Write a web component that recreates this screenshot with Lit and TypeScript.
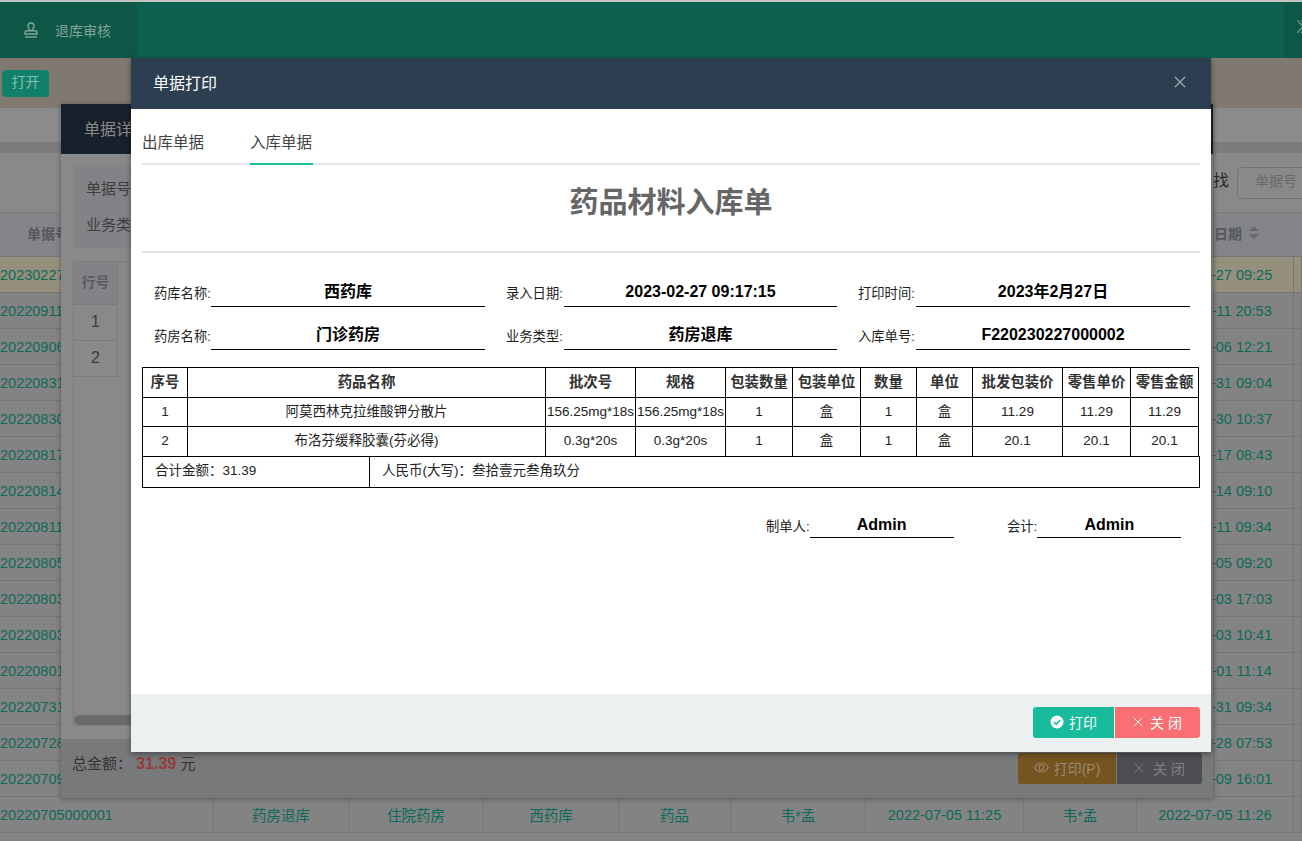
import { LitElement, html, css, svg } from "lit";
import { customElement } from "lit/decorators.js";

const rows = [
  ["20230227000002", "2023-02-27 09:25"],
  ["20220911000001", "2022-09-11 20:53"],
  ["20220906000001", "2022-09-06 12:21"],
  ["20220831000001", "2022-08-31 09:04"],
  ["20220830000001", "2022-08-30 10:37"],
  ["20220817000001", "2022-08-17 08:43"],
  ["20220814000001", "2022-08-14 09:10"],
  ["20220811000001", "2022-08-11 09:34"],
  ["20220805000001", "2022-08-05 09:20"],
  ["20220803000002", "2022-08-03 17:03"],
  ["20220803000001", "2022-08-03 10:41"],
  ["20220801000001", "2022-08-01 11:14"],
  ["20220731000001", "2022-07-31 09:34"],
  ["20220728000001", "2022-07-28 07:53"],
  ["20220709000001", "2022-07-09 16:01"],
  ["20220705000001", "2022-07-05 11:26"],
];

const lastRow = ["药房退库", "住院药房", "西药库", "药品", "韦*孟", "2022-07-05 11:25", "韦*孟"];

const fields = [
  ["药库名称:", "西药库"],
  ["录入日期:", "2023-02-27 09:17:15"],
  ["打印时间:", "2023年2月27日"],
  ["药房名称:", "门诊药房"],
  ["业务类型:", "药房退库"],
  ["入库单号:", "F220230227000002"],
];

const heads = ["序号", "药品名称", "批次号", "规格", "包装数量", "包装单位", "数量", "单位", "批发包装价", "零售单价", "零售金额"];
const colWidths = [45, 358, 90, 90, 67, 68, 56, 56, 90, 68, 68];
const items = [
  ["1", "阿莫西林克拉维酸钾分散片", "156.25mg*18s", "156.25mg*18s", "1", "盒", "1", "盒", "11.29", "11.29", "11.29"],
  ["2", "布洛芬缓释胶囊(芬必得)", "0.3g*20s", "0.3g*20s", "1", "盒", "1", "盒", "20.1", "20.1", "20.1"],
];

const closeIcon = (size: number) => svg`<svg width=${size} height=${size} viewBox="0 0 12 12" fill="none" stroke="currentColor" stroke-width="1.1"><path d="M1 1l10 10M11 1L1 11"/></svg>`;

@customElement("app-root")
export class AppRoot extends LitElement {
  static styles = css`
    :host {
      display: block;
      position: relative;
      width: 1302px;
      height: 841px;
      overflow: hidden;
      background: #838383;
      font-family: "Liberation Sans", "Noto Sans CJK SC", sans-serif;
      font-size: 14px;
      color: #333;
    }
    .topbar {
      height: 56px;
      border-top: 2px solid #c4c4c4;
      background: #0d604f;
      display: flex;
      justify-content: space-between;
    }
    .tab {
      width: 137px;
      background: #0c5746;
      display: flex;
      align-items: center;
      gap: 17px;
      padding-left: 24px;
      box-sizing: border-box;
      color: #84a39b;
    }
    .more {
      width: 18px;
      background: #0c5746;
      color: #84a39b;
      padding: 18px 0 0 13px;
      box-sizing: border-box;
    }
    .toolbar {
      height: 50px;
      background: #80796f;
      padding: 12px 0 0 2px;
      box-sizing: border-box;
    }
    .open {
      width: 47px;
      height: 27px;
      padding-bottom: 5px;
      box-sizing: border-box;
      background: #108068;
      color: #85bdb1;
      border-radius: 4px;
      display: flex;
      align-items: center;
      justify-content: center;
    }
    .gap {
      height: 34px;
      background: #8b8b8b;
    }
    .strip {
      height: 11px;
      background: #7c7c7d;
    }
    .search {
      height: 60px;
      background: #89898a;
      border-bottom: 1px solid #7b7b7b;
      box-sizing: border-box;
      display: flex;
      justify-content: flex-end;
      align-items: center;
      gap: 8px;
      color: #2a2a2a;
    }
    .search .find {
      font-size: 16px;
      padding-bottom: 7px;
    }
    .search .input {
      width: 70px;
      height: 32px;
      margin-right: -5px;
      border: 1px solid #737373;
      border-radius: 4px;
      box-sizing: border-box;
      color: #6a6a6a;
      padding: 2px 0 0 17px;
      font-size: 14px;
      white-space: nowrap;
      overflow: hidden;
    }
    .grid-row {
      display: grid;
      grid-template-columns: 214px 135px 135px 135px 112px 135px 158px 113px 157px 8px;
      height: 36px;
      box-sizing: border-box;
      border-bottom: 1px solid #767676;
      background: #838383;
      color: #0d6a59;
      font-size: 14.5px;
    }
    .grid-row.active {
      background: #958f7e;
    }
    .grid-row.head {
      height: 44px;
      padding-bottom: 4px;
      background: #82848a;
      color: #55575b;
      font-weight: bold;
      font-size: 14px;
    }
    .cell {
      display: flex;
      align-items: center;
      justify-content: center;
      border-right: 1px solid #767676;
      white-space: nowrap;
      overflow: hidden;
    }
    .cell.first {
      justify-content: flex-start;
    }
    .grid-row.head .cell {
      border-right: 0;
    }
    .sort {
      margin-left: 7px;
    }
    .head .num {
      padding-left: 27px;
    }
    .head .date {
      padding-left: 14px;
    }

    /* dimmed window behind the print dialog */
    .detail {
      position: absolute;
      left: 61px;
      top: 104px;
      width: 1152px;
      height: 694px;
      background: #89898a;
      box-shadow: 0 1px 5px rgba(0, 0, 0, 0.35);
      display: flex;
      flex-direction: column;
    }
    .detail-head {
      height: 50px;
      flex: none;
      box-sizing: border-box;
      background: #18202b;
      color: #8b8b8b;
      font-size: 16px;
      padding: 0 0 2px 23px;
      display: flex;
      align-items: center;
    }
    .detail-body {
      flex: 1;
      padding: 11px 12px 13px;
      display: flex;
      flex-direction: column;
      gap: 13px;
    }
    .panel {
      height: 83px;
      flex: none;
      background: #828386;
      padding: 11px 0 0 13px;
      box-sizing: border-box;
      font-size: 15px;
      color: #3e3e3e;
      display: flex;
      flex-direction: column;
      gap: 10px;
      line-height: 26px;
    }
    .inner {
      flex: 1;
      border: 1px solid #7e7e7e;
      position: relative;
    }
    .inner-row {
      display: flex;
      width: 44px;
      height: 36px;
      box-sizing: border-box;
      padding-bottom: 2px;
      align-items: center;
      justify-content: center;
      border-right: 1px solid #7b7b7b;
      border-bottom: 1px solid #7b7b7b;
      color: #3c3c3c;
      font-size: 16px;
    }
    .inner-row.head {
      height: 43px;
      padding-bottom: 5px;
      background: #828386;
      color: #5c5c5c;
      font-weight: bold;
      font-size: 14px;
    }
    .scroll {
      position: absolute;
      left: 0;
      bottom: 0;
      width: 900px;
      height: 10px;
      border-radius: 5px;
      background: #6b6b6b;
    }
    .detail-foot {
      height: 59px;
      flex: none;
      background: #78797b;
      display: flex;
      align-items: flex-start;
      justify-content: space-between;
      padding: 14px 11px 0 11px;
      box-sizing: border-box;
    }
    .sum {
      font-size: 15px;
      color: #333;
      line-height: 22px;
    }
    .sum b {
      color: #963c3c;
      font-size: 16px;
    }
    .btns {
      display: flex;
      gap: 1px;
    }
    .btn {
      height: 31px;
      padding-bottom: 2px;
      display: flex;
      align-items: center;
      justify-content: center;
      gap: 5px;
      font-size: 14px;
      box-sizing: border-box;
    }
    .btn.first {
      border-radius: 3px 0 0 3px;
    }
    .btn.last {
      border-radius: 0 3px 3px 0;
    }
    .dim-print {
      width: 98px;
      background: #75541f;
      color: #9a8a70;
    }
    .dim-close {
      width: 85px;
      background: #4d4e52;
      color: #808184;
    }

    /* print dialog */
    .modal {
      position: absolute;
      left: 131px;
      top: 58px;
      width: 1080px;
      height: 694px;
      background: #fff;
      box-shadow: 0 2px 6px rgba(0, 0, 0, 0.4);
      display: flex;
      flex-direction: column;
    }
    .modal-head {
      height: 51px;
      flex: none;
      box-sizing: border-box;
      background: #2c3e50;
      color: #fff;
      font-size: 16px;
      padding: 0 25px 3px 22px;
      display: flex;
      align-items: center;
      justify-content: space-between;
    }
    .modal-head span {
      color: #a5adb5;
      display: flex;
    }
    .modal-body {
      flex: 1;
      padding: 0 11px;
    }
    .tabs {
      height: 56px;
      box-sizing: border-box;
      border-bottom: 2px solid #e4e7ed;
      display: flex;
      gap: 45px;
      font-size: 15.5px;
      color: #444;
    }
    .tabs div {
      height: 56px;
      width: 63px;
      box-sizing: border-box;
      padding-top: 24px;
      line-height: 20px;
      white-space: nowrap;
    }
    .tabs .on {
      border-bottom: 2px solid #18bc9c;
    }
    h1 {
      margin: 0;
      height: 88px;
      box-sizing: border-box;
      padding-top: 20px;
      border-bottom: 2px solid #e0e3e8;
      text-align: center;
      font-size: 29px;
      line-height: 36px;
      color: #666;
    }
    .fields {
      display: grid;
      grid-template-columns: repeat(3, 352px);
      grid-auto-rows: 43px;
      padding: 11px 0 0 12px;
    }
    .field {
      display: flex;
      align-items: flex-end;
      color: #222;
      font-size: 13.3px;
    }
    .field label {
      width: 57px;
      flex: none;
      padding-bottom: 4px;
      line-height: 18px;
      white-space: nowrap;
    }
    .field .line {
      width: 274px;
      flex: none;
      box-sizing: border-box;
      border-bottom: 1px solid #000;
      text-align: center;
      color: #000;
      font-size: 16px;
      font-weight: bold;
      line-height: 22px;
      padding-bottom: 3px;
    }
    .fields .field:nth-child(3n + 2) label,
    .fields .field:nth-child(3n) label {
      width: 58px;
    }
    .fields .field:nth-child(3n + 2) .line {
      width: 273px;
    }
    table {
      border-collapse: collapse;
      table-layout: fixed;
      color: #222;
      font-size: 13.5px;
      line-height: 16px;
    }
    .bill {
      width: 1056px;
      margin-top: 17px;
    }
    .bill th,
    .bill td {
      box-sizing: border-box;
      border: 1px solid #000;
      padding: 0;
      text-align: center;
      white-space: nowrap;
      overflow: hidden;
    }
    .bill th {
      height: 30px;
      font-size: 14.4px;
      color: #333;
      padding-bottom: 2px;
    }
    .bill td {
      height: 29px;
      padding-bottom: 1px;
    }
    .bill tr:last-child td {
      height: 30px;
    }
    .total {
      width: 1058px;
      margin-top: -1px;
    }
    .total td {
      box-sizing: border-box;
      border: 1px solid #000;
      height: 31px;
      padding: 0 0 2px 12px;
    }
    .total .sum-cell {
      width: 227px;
    }
    .sign {
      display: flex;
      margin-top: 23px;
      padding-left: 624px;
      height: 27px;
    }
    .sign .field label {
      width: auto;
      padding-bottom: 2px;
    }
    .sign .a {
      width: 241px;
    }
    .sign .field .line {
      width: 144px;
      padding-bottom: 1px;
    }
    .modal-foot {
      height: 58px;
      flex: none;
      background: #ecf0f1;
      display: flex;
      justify-content: flex-end;
      gap: 1px;
      padding: 13px 11px 0 0;
      box-sizing: border-box;
    }
    .ok {
      width: 81px;
      background: #18bc9c;
      color: #fff;
    }
    .cancel {
      width: 85px;
      background: #f96f73;
      color: #fff;
      gap: 3px;
    }
  `;

  render() {
    return html`
      <div class="topbar">
        <div class="tab">
          <svg width="14" height="16" viewBox="0 0 14 16" fill="none" stroke="currentColor" stroke-width="1.4">
            <path d="M5.5 8.500V7.200C4.600 6.500 4 5.600 4 4.400 4 2.500 5.300 1 7 1s3 1.500 3 3.400c0 1.200-.6 2.100-1.500 2.800v1.300"/>
            <path d="M1 12v-1.200c0-1.200.8-2.100 2-2.100h8c1.200 0 2 .9 2 2.100V12z"/>
            <path d="M1 15h12"/>
          </svg>
          退库审核
        </div>
        <div class="more">
          <svg width="9" height="14" viewBox="0 0 9 14" fill="none" stroke="currentColor" stroke-width="1.1"><path d="M0 0l6 6.500L0 13M4 0l6 6.500L4 13"/></svg>
        </div>
      </div>
      <div class="toolbar"><div class="open">打开</div></div>
      <div class="gap"></div>
      <div class="strip"></div>
      <div class="search">
        <span class="find">查找</span>
        <div class="input">单据号</div>
      </div>
      <div class="grid-row head">
        <div class="cell first num">单据号</div>
        <div class="cell">业务类型</div>
        <div class="cell">药房</div>
        <div class="cell">药库</div>
        <div class="cell">类别</div>
        <div class="cell">申请人</div>
        <div class="cell">申请日期</div>
        <div class="cell">审核人</div>
        <div class="cell date">
          审核日期
          <svg class="sort" width="10" height="13" viewBox="0 0 10 13" fill="#66686c"><path d="M5 0l5 5H0zM0 8h10l-5 5z"/></svg>
        </div>
        <div class="cell"></div>
      </div>
      ${rows.map(
        (r, i) => html`
          <div class="grid-row ${i === 0 ? "active" : ""}">
            <div class="cell first">${r[0]}</div>
            ${i === rows.length - 1
              ? lastRow.map((c) => html`<div class="cell">${c}</div>`)
              : lastRow.map(() => html`<div class="cell"></div>`)}
            <div class="cell">${r[1]}</div>
            <div class="cell"></div>
          </div>
        `
      )}

      <div class="detail">
        <div class="detail-head">单据详情</div>
        <div class="detail-body">
          <div class="panel">
            <div>单据号</div>
            <div>业务类型</div>
          </div>
          <div class="inner">
            <div class="inner-row head">行号</div>
            <div class="inner-row">1</div>
            <div class="inner-row">2</div>
            <div class="scroll"></div>
          </div>
        </div>
        <div class="detail-foot">
          <div class="sum">总金额： <b>31.39</b> 元</div>
          <div class="btns">
            <div class="btn first dim-print">
              <svg width="15" height="11" viewBox="0 0 15 11" fill="none" stroke="currentColor" stroke-width="1.100">
                <path d="M.7 5.500C2.300 2.500 4.700 1 7.500 1s5.200 1.500 6.800 4.500C12.700 8.500 10.300 10 7.500 10S2.300 8.500.7 5.500z"/>
                <circle cx="7.500" cy="5.500" r="2.500"/>
              </svg>
              打印(P)
            </div>
            <div class="btn last dim-close">${closeIcon(10)}<span>&nbsp;关 闭</span></div>
          </div>
        </div>
      </div>

      <div class="modal">
        <div class="modal-head">
          单据打印
          <span>${closeIcon(12)}</span>
        </div>
        <div class="modal-body">
          <div class="tabs">
            <div>出库单据</div>
            <div class="on">入库单据</div>
          </div>
          <h1>药品材料入库单</h1>
          <div class="fields">
            ${fields.map(
              (f) => html`
                <div class="field">
                  <label>${f[0]}</label>
                  <div class="line">${f[1]}</div>
                </div>
              `
            )}
          </div>
          <table class="bill">
            <colgroup>
              ${colWidths.map((w) => html`<col style="width:${w}px" />`)}
            </colgroup>
            <tr>${heads.map((h) => html`<th>${h}</th>`)}</tr>
            ${items.map((r) => html`<tr>${r.map((c) => html`<td>${c}</td>`)}</tr>`)}
          </table>
          <table class="total">
            <tr>
              <td class="sum-cell">合计金额：31.39</td>
              <td>人民币(大写)：叁拾壹元叁角玖分</td>
            </tr>
          </table>
          <div class="sign">
            <div class="field a"><label>制单人:</label><div class="line">Admin</div></div>
            <div class="field"><label>会计:</label><div class="line">Admin</div></div>
          </div>
        </div>
        <div class="modal-foot">
          <div class="btn first ok">
            <svg width="14" height="14" viewBox="0 0 14 14">
              <circle cx="7" cy="7" r="6.500" fill="#fff"/>
              <path d="M4 7.200l2.200 2.100L10 5.300" fill="none" stroke="#18bc9c" stroke-width="1.600"/>
            </svg>
            打印
          </div>
          <div class="btn last cancel">${closeIcon(10)}<span>&nbsp;关 闭</span></div>
        </div>
      </div>
    `;
  }
}
